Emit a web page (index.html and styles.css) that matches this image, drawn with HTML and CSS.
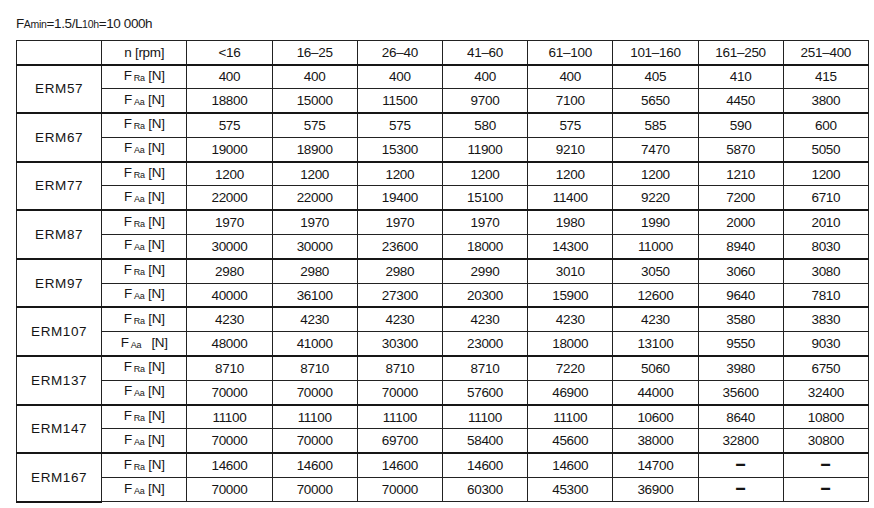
FILE: index.html
```html
<!DOCTYPE html>
<html>
<head>
<meta charset="utf-8">
<link rel="stylesheet" href="styles.css">
</head>
<body>
<div class="title">F<span class="tsub">Amin</span>=1.5/L<span class="tsub">10h</span>=10 000h</div>
<table class="load">
<colgroup><col><col><col><col><col><col><col><col><col><col></colgroup>
<tr class="head"><td></td><td>n [rpm]</td><td>&lt;16</td><td>16–25</td><td>26–40</td><td>41–60</td><td>61–100</td><td>101–160</td><td>161–250</td><td>251–400</td></tr>

<tr class="gtop"><td class="model" rowspan="2">ERM57</td><td>F<span class="sub">Ra</span> [N]</td><td>400</td><td>400</td><td>400</td><td>400</td><td>400</td><td>405</td><td>410</td><td>415</td></tr>
<tr><td>F<span class="sub">Aa</span> [N]</td><td>18800</td><td>15000</td><td>11500</td><td>9700</td><td>7100</td><td>5650</td><td>4450</td><td>3800</td></tr>

<tr class="gtop"><td class="model" rowspan="2">ERM67</td><td>F<span class="sub">Ra</span> [N]</td><td>575</td><td>575</td><td>575</td><td>580</td><td>575</td><td>585</td><td>590</td><td>600</td></tr>
<tr><td>F<span class="sub">Aa</span> [N]</td><td>19000</td><td>18900</td><td>15300</td><td>11900</td><td>9210</td><td>7470</td><td>5870</td><td>5050</td></tr>

<tr class="gtop"><td class="model" rowspan="2">ERM77</td><td>F<span class="sub">Ra</span> [N]</td><td>1200</td><td>1200</td><td>1200</td><td>1200</td><td>1200</td><td>1200</td><td>1210</td><td>1200</td></tr>
<tr><td>F<span class="sub">Aa</span> [N]</td><td>22000</td><td>22000</td><td>19400</td><td>15100</td><td>11400</td><td>9220</td><td>7200</td><td>6710</td></tr>

<tr class="gtop"><td class="model" rowspan="2">ERM87</td><td>F<span class="sub">Ra</span> [N]</td><td>1970</td><td>1970</td><td>1970</td><td>1970</td><td>1980</td><td>1990</td><td>2000</td><td>2010</td></tr>
<tr><td>F<span class="sub">Aa</span> [N]</td><td>30000</td><td>30000</td><td>23600</td><td>18000</td><td>14300</td><td>11000</td><td>8940</td><td>8030</td></tr>

<tr class="gtop"><td class="model" rowspan="2">ERM97</td><td>F<span class="sub">Ra</span> [N]</td><td>2980</td><td>2980</td><td>2980</td><td>2990</td><td>3010</td><td>3050</td><td>3060</td><td>3080</td></tr>
<tr><td>F<span class="sub">Aa</span> [N]</td><td>40000</td><td>36100</td><td>27300</td><td>20300</td><td>15900</td><td>12600</td><td>9640</td><td>7810</td></tr>

<tr class="gtop"><td class="model" rowspan="2">ERM107</td><td>F<span class="sub">Ra</span> [N]</td><td>4230</td><td>4230</td><td>4230</td><td>4230</td><td>4230</td><td>4230</td><td>3580</td><td>3830</td></tr>
<tr><td>F<span class="sub">Aa</span><span class="wide"> </span>[N]</td><td>48000</td><td>41000</td><td>30300</td><td>23000</td><td>18000</td><td>13100</td><td>9550</td><td>9030</td></tr>

<tr class="gtop"><td class="model" rowspan="2">ERM137</td><td>F<span class="sub">Ra</span> [N]</td><td>8710</td><td>8710</td><td>8710</td><td>8710</td><td>7220</td><td>5060</td><td>3980</td><td>6750</td></tr>
<tr><td>F<span class="sub">Aa</span> [N]</td><td>70000</td><td>70000</td><td>70000</td><td>57600</td><td>46900</td><td>44000</td><td>35600</td><td>32400</td></tr>

<tr class="gtop"><td class="model" rowspan="2">ERM147</td><td>F<span class="sub">Ra</span> [N]</td><td>11100</td><td>11100</td><td>11100</td><td>11100</td><td>11100</td><td>10600</td><td>8640</td><td>10800</td></tr>
<tr><td>F<span class="sub">Aa</span> [N]</td><td>70000</td><td>70000</td><td>69700</td><td>58400</td><td>45600</td><td>38000</td><td>32800</td><td>30800</td></tr>

<tr class="gtop"><td class="model" rowspan="2">ERM167</td><td>F<span class="sub">Ra</span> [N]</td><td>14600</td><td>14600</td><td>14600</td><td>14600</td><td>14600</td><td>14700</td><td><span class="dash">–</span></td><td><span class="dash">–</span></td></tr>
<tr><td>F<span class="sub">Aa</span> [N]</td><td>70000</td><td>70000</td><td>70000</td><td>60300</td><td>45300</td><td>36900</td><td><span class="dash">–</span></td><td><span class="dash">–</span></td></tr>
</table>
</body>
</html>
```

FILE: styles.css
```css
html, body {
  margin: 0;
  padding: 0;
  background: #ffffff;
}

body {
  font-family: "Liberation Sans", Arial, sans-serif;
  color: #141414;
}

.title {
  box-sizing: border-box;
  height: 40px;
  padding: 15.5px 0 0 16px;
  font-size: 13.5px;
  line-height: 16px;
  letter-spacing: -0.4px;
  color: #1a1a1a;
}

.tsub {
  font-size: 10.5px;
  letter-spacing: -0.3px;
}

.load {
  border-collapse: collapse;
  table-layout: fixed;
  width: 853px;
  margin-left: 16px;
}

.load col {
  width: 10%;
}

.load td {
  border: 1px solid #222222;
  padding: 0;
  text-align: center;
  vertical-align: middle;
  font-size: 13.5px;
  line-height: 15px;
  letter-spacing: -0.3px;
  white-space: nowrap;
}

.load tr {
  height: 24.3px;
}

.load tr.head {
  height: 24px;
}

.load tr.gtop td {
  border-top: 2px solid #161616;
}

.load td.model {
  border-bottom: 2px solid #161616;
  letter-spacing: 0.6px;
  font-size: 13.5px;
}

.sub {
  font-size: 9px;
  margin-left: 2px;
  vertical-align: -1px;
  letter-spacing: -0.2px;
}

.wide {
  display: inline-block;
  width: 10px;
}

.dash {
  display: inline-block;
  font-weight: bold;
  font-size: 13px;
  line-height: 10px;
  transform: scale(1.4, 1.7) translateY(-1px);
}
```
